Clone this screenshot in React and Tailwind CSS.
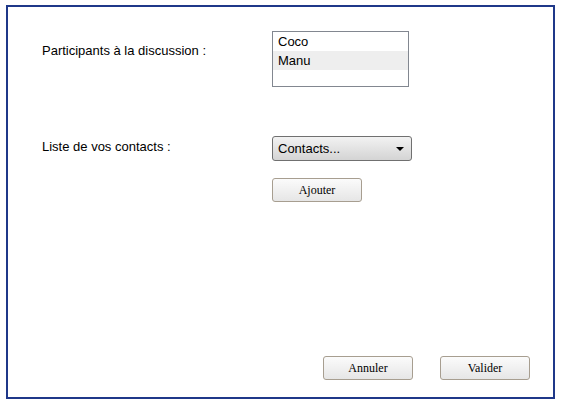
export default function App() {
  const sans = { fontFamily: '"Liberation Sans", Arial, sans-serif' };
  return (
    <div className="w-[561px] h-[405px] bg-white pt-[5px] pl-[6px]" style={sans}>
      <div className="w-[549px] h-[394px] border-2 border-[#1f3889] flex flex-col text-[13px] text-black">
        <div className="flex mt-[24px]">
          <div className="w-[264px] pl-[34px] pt-[12px] leading-[15px]">Participants à la discussion :</div>
          <div className="w-[137px] h-[56px] border border-[#828790] bg-white text-[13px] leading-[19px]">
            <div className="pl-[5px] h-[19px]">Coco</div>
            <div className="pl-[5px] h-[19px] bg-[#eeeeee]">Manu</div>
          </div>
        </div>
        <div className="flex mt-[49px]">
          <div className="w-[264px] pl-[34px] pt-[3px] leading-[15px]">Liste de vos contacts :</div>
          <div className="w-[140px] h-[25px] border border-[#707070] rounded-[3px] bg-gradient-to-b from-[#f2f2f2] to-[#d4d4d4] flex items-center justify-between pl-[5px] pr-[7px] text-[13px]">
            <span>Contacts...</span>
            <svg width="8" height="4" viewBox="0 0 8 4"><path d="M0 0H8L4 4Z" fill="#000" /></svg>
          </div>
        </div>
        <div className="ml-[264px] mt-[17px]">
          <Btn label="Ajouter" />
        </div>
        <div className="mt-auto mb-[17px] flex ml-[315px] gap-[27px]">
          <Btn label="Annuler" />
          <Btn label="Valider" />
        </div>
      </div>
    </div>
  );
}

function Btn({ label }) {
  return (
    <div
      className="w-[90px] h-[24px] border border-[#a79e90] rounded-[3px] bg-gradient-to-b from-[#fbfbfb] to-[#e6e6e6] flex items-center justify-center text-[12px] text-black"
      style={{ fontFamily: '"Liberation Serif", "Times New Roman", serif' }}
    >
      {label}
    </div>
  );
}
